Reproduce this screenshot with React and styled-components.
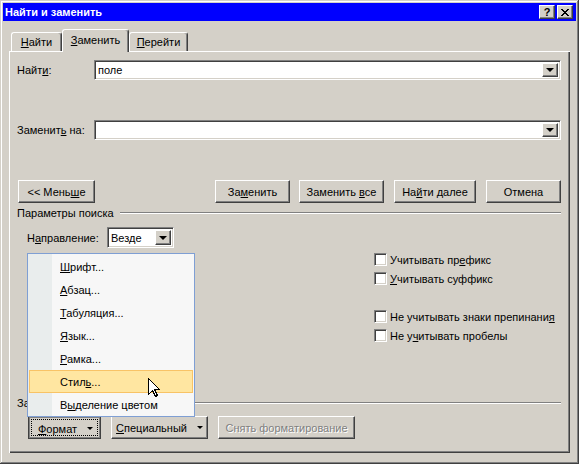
import React from "react";
import styled, { createGlobalStyle, css } from "styled-components";

const GlobalStyle = createGlobalStyle`
  html, body { margin: 0; padding: 0; background: #d4d0c8; }
  body {
    font-family: "Liberation Sans", Arial, sans-serif;
    font-size: 11px;
    color: #000;
  }
  * { box-sizing: border-box; }
  u { text-underline-offset: 1px; }
`;

const raised = css`
  background: #d4d0c8;
  border: 1px solid;
  border-color: #fff #404040 #404040 #fff;
  box-shadow: inset -1px -1px #808080;
`;

const sunken = css`
  border: 1px solid;
  border-color: #808080 #fff #fff #808080;
  box-shadow: inset 1px 1px #404040, inset -1px -1px #d4d0c8;
`;

const Window = styled.div`
  position: relative;
  width: 579px;
  height: 464px;
  padding: 3px;
  display: flex;
  flex-direction: column;
  background: #d4d0c8;
  box-shadow: inset -1px -1px #404040, inset 1px 1px #d4d0c8,
    inset -2px -2px #808080, inset 2px 2px #fff;
  overflow: hidden;
`;

const TitleBar = styled.div`
  height: 18px;
  display: flex;
  align-items: center;
  padding: 0 3px 0 2px;
  background: #0000ff;
  color: #fff;
  font-weight: bold;
  font-size: 11px;
`;

const TitleButtons = styled.div`
  margin-left: auto;
  display: flex;
  gap: 2px;
`;

const TitleButton = styled.div`
  ${raised};
  width: 16px;
  height: 14px;
  display: flex;
  align-items: center;
  justify-content: center;
  color: #000;
  font-weight: bold;
  font-size: 11px;
`;

const Body = styled.div`
  flex: 1;
  display: flex;
  flex-direction: column;
  padding: 8px 6px 8px 6px;
`;

const TabStrip = styled.div`
  position: relative;
  z-index: 1;
  display: flex;
  align-items: flex-end;
  height: 22px;
  padding-left: 2px;
`;

const Tab = styled.div`
  width: ${(p) => p.$w}px;
  height: ${(p) => (p.$active ? 23 : 19)}px;
  margin-bottom: ${(p) => (p.$active ? -1 : 0)}px;
  display: flex;
  align-items: center;
  justify-content: center;
  padding-bottom: ${(p) => (p.$active ? 2 : 0)}px;
  background: #d4d0c8;
  border-top: 1px solid #fff;
  border-left: 1px solid #fff;
  border-right: 1px solid #404040;
  border-radius: 3px 3px 0 0;
  box-shadow: inset -1px 0 #808080;
`;

const Panel = styled.div`
  flex: 1;
  display: flex;
  flex-direction: column;
  padding: 9px 9px 0 8px;
  box-shadow: inset 1px 1px #fff, inset -1px -1px #404040,
    inset -2px -2px #808080;
`;

const FieldRow = styled.div`
  display: flex;
  align-items: center;
  height: ${(p) => p.$h || 20}px;
  margin-top: ${(p) => p.$mt || 0}px;
  padding-left: ${(p) => p.$indent || 0}px;
`;

const FieldLabel = styled.div`
  width: ${(p) => p.$w}px;
  flex-shrink: 0;
`;

const Combo = styled.div`
  ${sunken};
  width: ${(p) => p.$w}px;
  height: 100%;
  background: #fff;
  display: flex;
  align-items: stretch;
  padding: 2px 2px 2px 3px;
`;

const ComboText = styled.div`
  flex: 1;
  display: flex;
  align-items: center;
`;

const DropButton = styled.div`
  ${raised};
  width: 16px;
  display: flex;
  align-items: center;
  justify-content: center;
`;

const Triangle = styled.span`
  width: 0;
  height: 0;
  border-left: ${(p) => p.$s}px solid transparent;
  border-right: ${(p) => p.$s}px solid transparent;
  border-top: ${(p) => p.$s}px solid ${(p) => p.$color || "#000"};
`;

const ButtonRow = styled.div`
  display: flex;
  align-items: center;
  height: 23px;
  gap: 10px;
  margin-top: ${(p) => p.$mt || 0}px;
  padding-left: ${(p) => p.$indent || 0}px;
`;

const Button = styled.div`
  ${raised};
  width: ${(p) => p.$w}px;
  height: 23px;
  display: flex;
  align-items: center;
  justify-content: center;
  gap: 10px;
  white-space: nowrap;
  color: ${(p) => (p.$disabled ? "#808080" : "#000")};
  text-shadow: ${(p) => (p.$disabled ? "1px 1px #fff" : "none")};
  margin-left: ${(p) => p.$ml || 0}px;
  ${(p) =>
    p.$pressed &&
    css`
      border: 1px solid #404040;
      box-shadow: inset 1px 1px #808080, inset -1px -1px #808080;
      outline: 1px dotted #000;
      outline-offset: -4px;
      padding-top: 2px;
      padding-left: 2px;
    `}
`;

const Spacer = styled.div`
  flex: 1;
`;

const GroupHeader = styled.div`
  display: flex;
  align-items: center;
  gap: 6px;
  height: 14px;
  margin-top: ${(p) => p.$mt || 0}px;
`;

const GroupLine = styled.div`
  flex: 1;
  height: 2px;
  border-top: 1px solid #808080;
  border-bottom: 1px solid #fff;
`;

const CheckGrid = styled.div`
  display: grid;
  grid-template-columns: 357px 1fr;
  grid-auto-rows: 19px;
  margin-top: 2px;
`;

const Check = styled.label`
  grid-column: 2;
  grid-row: ${(p) => p.$row};
  display: flex;
  align-items: center;
  gap: 3px;
  white-space: nowrap;
`;

const Box = styled.span`
  ${sunken};
  width: 13px;
  height: 13px;
  background: #fff;
  flex-shrink: 0;
`;

const Menu = styled.div`
  position: absolute;
  left: 27px;
  top: 253px;
  width: 168px;
  height: 164px;
  padding: 1px 1px 0;
  border: 1px solid #7f9fd4;
  background: linear-gradient(to right, #e9eded 0 24px, #f7f7f7 24px);
  z-index: 5;
`;

const MenuItem = styled.div`
  height: 23px;
  display: flex;
  align-items: center;
  padding-left: 30px;
  border: 1px solid ${(p) => (p.$hot ? "#f8c366" : "transparent")};
  background: ${(p) => (p.$hot ? "#ffe6a1" : "transparent")};
  color: #000;
`;

const Cursor = styled.svg`
  position: absolute;
  left: 148px;
  top: 378px;
  z-index: 6;
`;

export default function App() {
  const menuItems = [
    <><u>Ш</u>рифт...</>,
    <><u>А</u>бзац...</>,
    <><u>Т</u>абуляция...</>,
    <><u>Я</u>зык...</>,
    <><u>Р</u>амка...</>,
    <>Стил<u>ь</u>...</>,
    <>В<u>ы</u>деление цветом</>,
  ];

  return (
    <>
      <GlobalStyle />
      <Window>
        <TitleBar>
          Найти и заменить
          <TitleButtons>
            <TitleButton>?</TitleButton>
            <TitleButton>
              <svg width="8" height="7" viewBox="0 0 8 7" shapeRendering="crispEdges">
                <path d="M0.5 0 L7.5 7 M7.5 0 L0.5 7" stroke="#000" strokeWidth="1.6" />
              </svg>
            </TitleButton>
          </TitleButtons>
        </TitleBar>

        <Body>
          <TabStrip>
            <Tab $w={51}><span><u>Н</u>айти</span></Tab>
            <Tab $w={67} $active><span><u>З</u>аменить</span></Tab>
            <Tab $w={59}><span><u>П</u>ерейти</span></Tab>
          </TabStrip>

          <Panel>
            <FieldRow>
              <FieldLabel $w={77}>Найт<u>и</u>:</FieldLabel>
              <Combo $w={467}>
                <ComboText>поле</ComboText>
                <DropButton><Triangle $s={4} /></DropButton>
              </Combo>
            </FieldRow>

            <FieldRow $mt={40}>
              <FieldLabel $w={77}>Заменит<u>ь</u> на:</FieldLabel>
              <Combo $w={467}>
                <ComboText />
                <DropButton><Triangle $s={4} /></DropButton>
              </Combo>
            </FieldRow>

            <ButtonRow $mt={40}>
              <Button $w={77} $ml={1}><span>&lt;&lt; Мень<u>ш</u>е</span></Button>
              <Spacer />
              <Button $w={75}><span>За<u>м</u>енить</span></Button>
              <Button $w={85} $ml={-1}><span>Заменить <u>в</u>се</span></Button>
              <Button $w={82}><span>На<u>й</u>ти далее</span></Button>
              <Button $w={75}><span>Отмена</span></Button>
            </ButtonRow>

            <GroupHeader $mt={3}>
              <span>Параметры поиска</span>
              <GroupLine />
            </GroupHeader>

            <FieldRow $h={21} $mt={7} $indent={10}>
              <FieldLabel $w={80}>Н<u>а</u>правление:</FieldLabel>
              <Combo $w={67}>
                <ComboText>Везде</ComboText>
                <DropButton><Triangle $s={4} /></DropButton>
              </Combo>
            </FieldRow>

            <CheckGrid>
              <Check $row={1}><Box /><span>Учитывать пр<u>е</u>фикс</span></Check>
              <Check $row={2}><Box /><span><u>У</u>читывать суффикс</span></Check>
              <Check $row={4}><Box /><span>Не учитывать знаки препинани<u>я</u></span></Check>
              <Check $row={5}><Box /><span>Не у<u>ч</u>итывать пробелы</span></Check>
            </CheckGrid>

            <GroupHeader $mt={51}>
              <span>Заменить</span>
              <GroupLine />
            </GroupHeader>

            <ButtonRow $mt={6} $indent={11}>
              <Button $w={73} $pressed>
                <span><u>Ф</u>ормат</span>
                <Triangle $s={3} />
              </Button>
              <Button $w={97}>
                <span><u>С</u>пециальный</span>
                <Triangle $s={3} />
              </Button>
              <Button $w={137} $disabled><span>Снять форматирование</span></Button>
            </ButtonRow>
          </Panel>
        </Body>

        <Menu>
          {menuItems.map((label, i) => (
            <MenuItem key={i} $hot={i === 5}><span>{label}</span></MenuItem>
          ))}
        </Menu>

        <Cursor width="12" height="20" viewBox="0 0 12 20" shapeRendering="crispEdges">
          <polygon
            points="0.5,0.5 0.5,16.5 4.5,12.5 7.5,18.5 9.5,17.5 6.5,11.5 11.5,11.5"
            fill="#fff"
            stroke="#000"
            strokeWidth="1"
          />
        </Cursor>
      </Window>
    </>
  );
}
